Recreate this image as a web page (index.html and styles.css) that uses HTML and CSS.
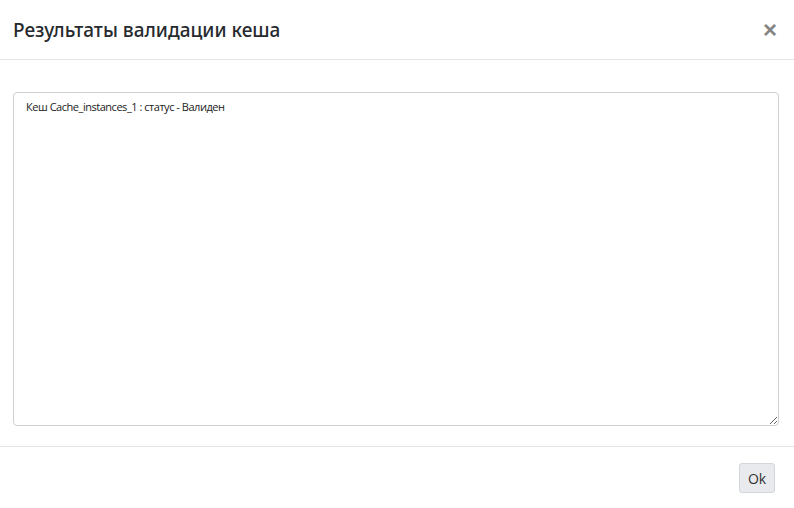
FILE: index.html
```html
<!DOCTYPE html>
<html lang="ru">

<head>
    <meta charset="UTF-8">
    <meta name="viewport" content="width=device-width, initial-scale=1.0">
    <title>Результаты валидации кеша</title>
    <link rel="stylesheet" href="styles.css">
</head>

<body>
    <div class="modal-content">
        <div class="modal-header">
            <h5 class="modal-title">Результаты валидации кеша</h5>
            <button type="button" class="close" aria-label="Close">&times;</button>
        </div>
        <div class="modal-body">
            <textarea class="result-text" readonly>Кеш Cache_instances_1 : статус - Валиден</textarea>
        </div>
        <div class="modal-footer">
            <button type="button" class="btn-ok">Ok</button>
        </div>
    </div>
</body>

</html>
```

FILE: styles.css
```css
body {
    margin: 0;
    background-color: #fff;
    font-family: "Noto Sans", "Open Sans", Arial, sans-serif;
    color: #212529;
}

.modal-content {
    width: 794px;
    height: 508px;
    display: flex;
    flex-direction: column;
    background-color: #fff;
}

.modal-header {
    display: flex;
    align-items: center;
    justify-content: space-between;
    height: 59px;
    padding: 0 16px 0 13px;
    border-bottom: 1px solid #e3e5e8;
    box-sizing: content-box;
}

.modal-title {
    margin: 0;
    font-size: 19px;
    font-weight: 500;
    line-height: 30px;
    color: #262a2e;
}

.close {
    background: none;
    border: none;
    padding: 0;
    width: 16px;
    height: 20px;
    font-family: Arial, sans-serif;
    font-size: 24px;
    font-weight: bold;
    line-height: 20px;
    color: #858585;
    cursor: pointer;
}

.modal-body {
    padding: 32px 15px 20px 13px;
}

.result-text {
    display: block;
    width: 100%;
    height: 334px;
    box-sizing: border-box;
    padding: 6px 12px;
    border: 1px solid #cdd1d6;
    border-radius: 4px;
    font-family: "Open Sans", "Noto Sans", Arial, sans-serif;
    font-size: 11px;
    line-height: 16px;
    letter-spacing: -0.47px;
    color: #222;
    resize: vertical;
    outline: none;
}

.modal-footer {
    display: flex;
    justify-content: flex-end;
    padding: 16px 19px 0 0;
    border-top: 1px solid #e3e5e8;
}

.btn-ok {
    width: 36px;
    height: 30px;
    padding: 0;
    background-color: #e8eaed;
    border: 1px solid #d3d6da;
    border-radius: 3px;
    font-family: "Open Sans", "Noto Sans", Arial, sans-serif;
    font-size: 14px;
    color: #333;
    cursor: pointer;
}
```
